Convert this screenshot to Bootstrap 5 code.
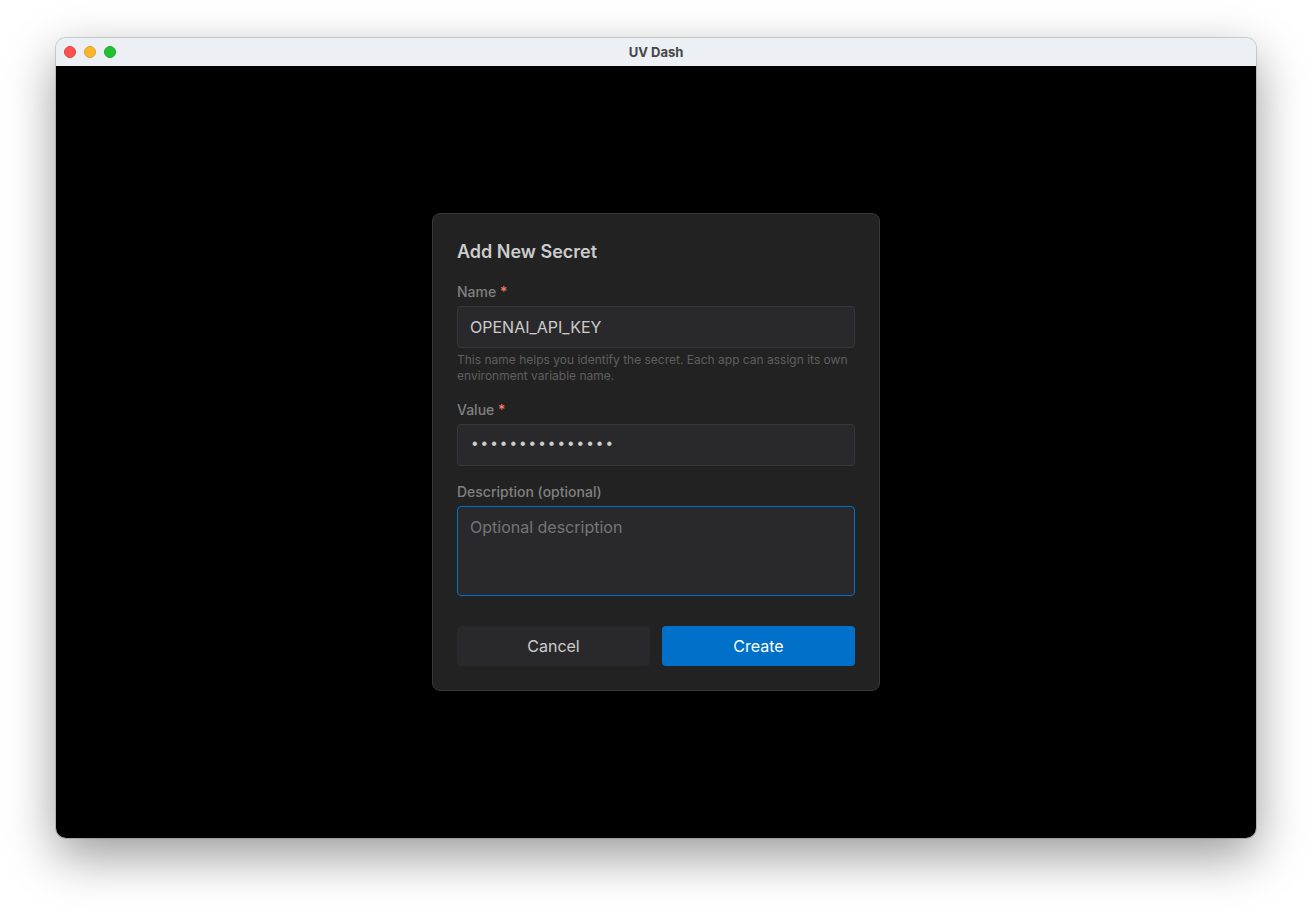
<!DOCTYPE html>
<html lang="en">
<head>
<meta charset="utf-8">
<meta name="viewport" content="width=device-width, initial-scale=1">
<title>UV Dash</title>
<link href="https://cdn.jsdelivr.net/npm/bootstrap@5.3.0/dist/css/bootstrap.min.css" rel="stylesheet">
<style>
  body { background: #fff; font-family: Inter, "Liberation Sans", sans-serif; padding: 38px 56px 74px; }
  .app-window { border-radius: 10px; box-shadow: 0 0 0 1px rgba(0,0,0,.15), 0 18px 50px rgba(0,0,0,.4); }
  .app-window main { background: #000; border-radius: 0 0 10px 10px; }
  .title-bar { background: #eceff3; color: #454648; height: 28px; padding: 0 8px; border-radius: 10px 10px 0 0; display: grid; grid-template-columns: 1fr auto 1fr; }
  .title-bar h1 { font-size: 13px; line-height: 28px; }
  .light { width: 12px; height: 12px; border-radius: 50%; border: 1px solid; }
  .light-close { background: #ff5150; border-color: #e0443e; }
  .light-min { background: #ffb429; border-color: #dea123; }
  .light-max { background: #21c231; border-color: #1aab29; }
  .secret-card { max-width: 448px; background: #222; border: 1px solid #3a3a3c; border-radius: 8px; color: #ccc; }
  .secret-card h2 { font-size: 18px; line-height: 28px; }
  .form-label { font-size: 14px; line-height: 20px; color: #808080; font-weight: 500; }
  .req { color: #f47a62; }
  .form-control, .form-control:focus { background: #29292b; border-color: #37373a; color: #ccc; border-radius: 4px; padding: 8px 12px; line-height: 24px; box-shadow: none; }
  .form-control[type="password"] { font-family: "Liberation Mono", monospace; height: 42px; }
  .form-control.active-field { border-color: #0070c8; resize: none; }
  .form-control::placeholder { color: #757575; }
  .form-text { font-size: 12px; line-height: 16px; color: #5f5f5f; }
  .btn { border: 0; border-radius: 4px; line-height: 24px; padding: 8px 16px; }
  .btn-plain, .btn-plain:hover { background: #29292b; color: #ccc; }
  .btn-create, .btn-create:hover { background: #0070c8; color: #fff; }
  .actions { margin-top: 30px; gap: 12px; }
</style>
</head>
<body class="min-vh-100 d-flex flex-column">
<div class="app-window flex-grow-1 d-flex flex-column">
  <header class="title-bar align-items-center">
    <div class="d-flex gap-2">
      <span class="light light-close"></span>
      <span class="light light-min"></span>
      <span class="light light-max"></span>
    </div>
    <h1 class="fw-bold mb-0">UV Dash</h1>
  </header>
  <main class="flex-grow-1 d-flex align-items-center justify-content-center">
    <form class="secret-card w-100 p-4">
      <h2 class="fw-semibold mb-3">Add New Secret</h2>
      <div class="mb-3">
        <label class="form-label d-block mb-1" for="name">Name <span class="req">*</span></label>
        <input class="form-control" id="name" type="text" value="OPENAI_API_KEY">
        <p class="form-text mt-1 mb-0">This name helps you identify the secret. Each app can assign its own environment variable name.</p>
      </div>
      <div class="mb-3">
        <label class="form-label d-block mb-1" for="value">Value <span class="req">*</span></label>
        <input class="form-control" id="value" type="password" value="sk-proj-1234567">
      </div>
      <div>
        <label class="form-label d-block mb-1" for="description">Description (optional)</label>
        <textarea class="form-control active-field" id="description" rows="3" placeholder="Optional description"></textarea>
      </div>
      <div class="actions d-flex">
        <button class="btn btn-plain flex-fill w-50" type="button">Cancel</button>
        <button class="btn btn-create flex-fill w-50" type="submit">Create</button>
      </div>
    </form>
  </main>
</div>
<script src="https://cdn.jsdelivr.net/npm/bootstrap@5.3.0/dist/js/bootstrap.bundle.min.js"></script>
</body>
</html>
